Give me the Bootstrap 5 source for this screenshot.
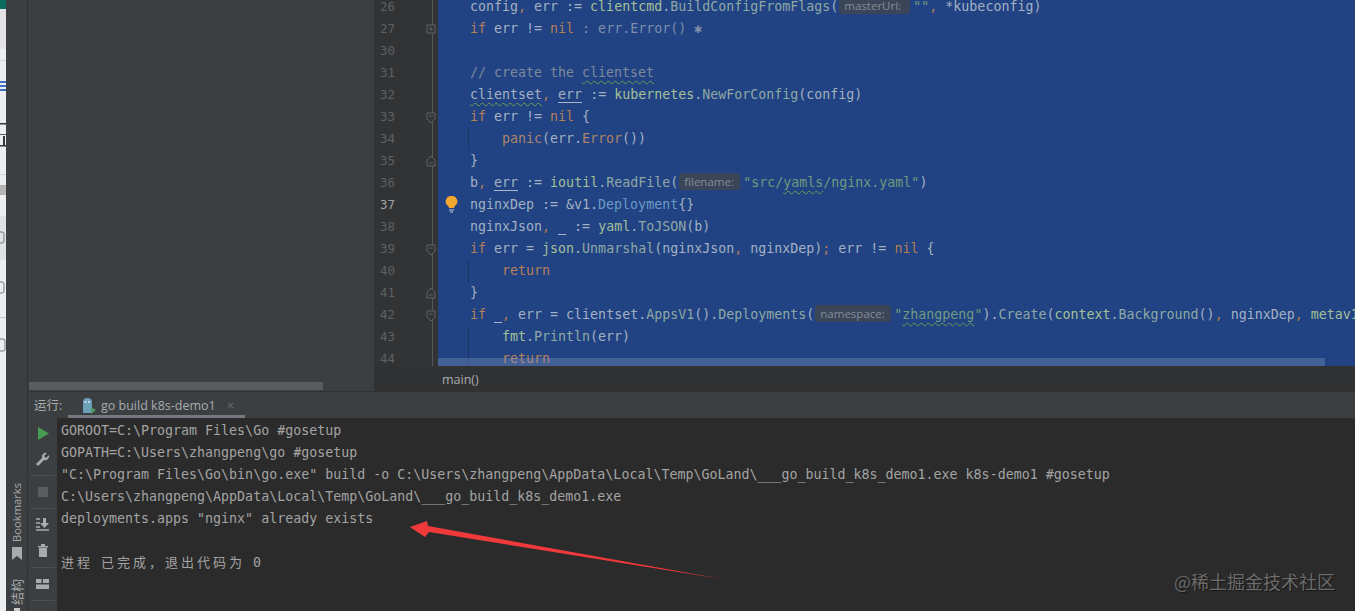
<!DOCTYPE html>
<html lang="zh">
<head>
<meta charset="utf-8">
<title>GoLand</title>
<link href="https://cdn.jsdelivr.net/npm/bootstrap@5.3.0/dist/css/bootstrap.min.css" rel="stylesheet">
<style>
html,body{height:611px;overflow:hidden;background:#3c3f41;}
.ide{width:1355px;height:611px;font-family:"DejaVu Sans Mono","Noto Sans CJK SC",monospace;font-size:13.3px;}
.edge{width:6px;flex:none;display:block;}
.stripe{width:22px;flex:none;background:#3c3f41;border-right:1px solid #323232;color:#a8abad;font-family:"Open Sans","Noto Sans CJK SC",sans-serif;padding-left:1px;}
.vtext{writing-mode:vertical-rl;text-orientation:sideways;transform:rotate(180deg);font-size:11.2px;line-height:14px;white-space:nowrap;}
.bm-label{margin-bottom:5px;}
.bm-icon{margin-bottom:19px;flex:none;}
.cn-label{font-size:13px;margin-bottom:3px;}
.stripe-dot{display:block;width:6px;height:3px;background:#c8cacc;flex:none;}
.toprow{height:391px;flex:none;}
.project{width:346px;flex:none;background:#3c3f41;}
.pscroll{height:8px;width:294px;margin:0 0 1px 1px;background:#595b5d;}
.gutter{width:64px;flex:none;background:#313335;margin-top:-4px;color:#5d6164;font-size:12.5px;}
.gline{height:22px;line-height:22px;padding-left:6px;width:59px;border-right:1px solid #55585a;position:relative;}
.gline.now{color:#a4a4a4;}
.gline svg{position:absolute;right:-6px;top:5px;}
.codewrap{background:#214283;}
.codebody{margin-top:-4px;color:#a3b1c2;}
.cl{height:22px;line-height:22px;padding-left:32px;position:relative;white-space:pre;}
.cl.in{padding-left:30px;}
.guide{display:block;height:22px;border-left:1px solid #1b3566;padding-left:33px;}
.kw{color:#b57f58;}.op{color:#b57f58;}
.pk{color:#a3c098;}.fn{color:#8ea9a3;}.me{color:#ab8569;}.ty{color:#6a9bc3;}
.st{color:#6f9a80;}.cm{color:#7d8a9c;}.dim{color:#7f8fa8;}
.wav{text-decoration:underline wavy #6f9a50 1px;text-underline-offset:3px;}
.und{text-decoration:underline solid #a9b7c6 1px;text-underline-offset:3px;}
.hint{display:inline-block;height:17px;line-height:17px;background:#3a4558;color:#858d99;border-radius:3px;font-family:"Open Sans",sans-serif;font-size:11.5px;padding:0 5px;margin:0 3px 0 1px;vertical-align:-3px;overflow:hidden;text-align:left;}
.h1{width:71px;}.h2{width:61px;}.h3{width:76px;}
.bulb{position:absolute;left:7px;top:2px;}
.hscroll{position:absolute;left:0;bottom:0;height:8px;width:887px;background:rgba(140,160,190,.33);}
.crumb{height:25px;flex:none;background:#2f3132;color:#a9adb0;font-family:"Open Sans",sans-serif;font-size:12.5px;line-height:23px;padding:2px 0 0 68px;}
.runbar{height:27px;flex:none;background:#3c3f41;border-top:1px solid #323232;color:#a8abad;font-family:"Open Sans","Noto Sans CJK SC",sans-serif;font-size:12.5px;}
.runlabel{width:40px;padding:2px 0 0 6px;flex:none;line-height:24px;white-space:nowrap;}
.runtab{width:177px;height:26px;border-bottom:3px solid #747a80;flex:none;padding:5px 0 0 14px;white-space:nowrap;gap:5px;}
.xmark{color:#686b6e;margin-left:6px;font-size:13px;}
.tools{width:29px;flex:none;background:#3c3f41;}
.tb{height:26px;flex:none;}
.tb-m2{margin-top:2px;}.tb-m3{margin-top:3px;}.tsep-m3{margin-top:3px;}.tsep-m4{margin-top:4px;}
.tsep{height:1px;background:#4d5052;flex:none;width:24px;margin-left:3px;}
.console{background:#2b2b2b;color:#a3a3a3;padding:2px 0 0 4px;}
.cline{height:22px;line-height:22px;white-space:pre;}
.cjk{font-size:13px;letter-spacing:3px;}
.arrow{position:absolute;left:405px;top:518px;}
.mark-wm{position:absolute;right:20px;bottom:19px;color:#6b6b6b;font-family:"Noto Sans CJK SC",sans-serif;font-size:18px;line-height:22px;text-shadow:1px 1px 1px #161616;}
</style>
</head>
<body class="m-0">
<div class="ide d-flex position-relative overflow-hidden">
  <svg class="edge" width="6" height="611" viewBox="0 0 6 611" aria-hidden="true">
    <rect width="6" height="611" fill="#eceef0"/>
    <rect width="6" height="9" fill="#0c6b60"/>
    <rect y="9" width="6" height="40" fill="#e3e3e5"/>
    <rect y="60" width="6" height="1" fill="#d2d2d2"/>
    <rect y="81" width="6" height="2" fill="#3f70c2"/><rect y="85" width="6" height="2" fill="#3f70c2"/><rect y="89" width="6" height="2" fill="#3f70c2"/>
    <rect y="123" width="6" height="1.500" fill="#33363a"/>
    <rect y="134" width="6" height="1" fill="#555"/><rect y="145" width="6" height="1.500" fill="#33363a"/><rect x="3" y="136" width="2" height="10" fill="#33363a"/>
    <rect y="174" width="6" height="1" fill="#cfcfcf"/>
    <rect y="185" width="6" height="10" fill="#b5b5b5"/>
    <rect y="216" width="6" height="44" fill="#e0e1e4"/>
    <path d="M0 232H2Q4 232 4 234V241Q4 243 2 243H0" fill="none" stroke="#777"/>
    <path d="M0 282H2Q4 282 4 284V291Q4 293 2 293H0" fill="none" stroke="#777"/>
    <rect y="317" width="6" height="1" fill="#c9c9c9"/>
    <path d="M0 339H3Q5 339 5 341V349Q5 351 3 351H0" fill="none" stroke="#777"/>
  </svg>
  <div class="stripe d-flex flex-column align-items-center justify-content-end">
    <span class="vtext bm-label">Bookmarks</span>
    <svg class="bm-icon" width="10" height="13" viewBox="0 0 10 13" aria-hidden="true"><path d="M0 0H10V13L5 9L0 13Z" fill="#a8abad"/></svg>
    <span class="vtext cn-label">结构</span>
    <span class="stripe-dot"></span>
  </div>
  <div class="d-flex flex-column flex-grow-1 overflow-hidden">
    <div class="toprow d-flex">
      <div class="project d-flex flex-column justify-content-end"><div class="pscroll"></div></div>
      <div class="d-flex flex-column flex-grow-1 overflow-hidden">
        <div class="d-flex flex-grow-1 overflow-hidden">
          <div class="gutter">
            <div class="gline">26</div>
            <div class="gline">27<svg width="13" height="13" viewBox="0 0 13 13" aria-hidden="true"><rect x="2" y="2" width="8" height="8" fill="#313335" stroke="#606366"/><path d="M4 6H8M6 4V8" stroke="#606366"/></svg></div>
            <div class="gline">30</div>
            <div class="gline">31</div>
            <div class="gline">32</div>
            <div class="gline">33<svg width="13" height="13" viewBox="0 0 13 13" aria-hidden="true"><path d="M2 2H10V8L6 12L2 8Z" fill="#313335" stroke="#606366"/><path d="M4 5H8" stroke="#606366"/></svg></div>
            <div class="gline">34</div>
            <div class="gline">35<svg width="13" height="13" viewBox="0 0 13 13" aria-hidden="true"><path d="M2 11H10V5L6 1L2 5Z" fill="#313335" stroke="#606366"/><path d="M4 8H8" stroke="#606366"/></svg></div>
            <div class="gline">36</div>
            <div class="gline now">37</div>
            <div class="gline">38</div>
            <div class="gline">39<svg width="13" height="13" viewBox="0 0 13 13" aria-hidden="true"><path d="M2 2H10V8L6 12L2 8Z" fill="#313335" stroke="#606366"/><path d="M4 5H8" stroke="#606366"/></svg></div>
            <div class="gline">40</div>
            <div class="gline">41<svg width="13" height="13" viewBox="0 0 13 13" aria-hidden="true"><path d="M2 11H10V5L6 1L2 5Z" fill="#313335" stroke="#606366"/><path d="M4 8H8" stroke="#606366"/></svg></div>
            <div class="gline">42<svg width="13" height="13" viewBox="0 0 13 13" aria-hidden="true"><path d="M2 2H10V8L6 12L2 8Z" fill="#313335" stroke="#606366"/><path d="M4 5H8" stroke="#606366"/></svg></div>
            <div class="gline">43</div>
            <div class="gline">44</div>
          </div>
          <div class="codewrap flex-grow-1 position-relative overflow-hidden">
            <div class="codebody">
<div class="cl">config<span class="op">,</span> err := <span class="pk">clientcmd</span>.<span class="fn">BuildConfigFromFlags</span>(<span class="hint h1">masterUrl:</span><span class="st">""</span><span class="op">,</span> *kubeconfig)</div>
<div class="cl"><span class="kw">if</span> err != <span class="kw">nil</span> <span class="dim">: err.Error() ✱</span></div>
<div class="cl"> </div>
<div class="cl"><span class="cm">// create the <span class="wav">clientset</span></span></div>
<div class="cl"><span class="wav">clientset</span><span class="op">,</span> <span class="und">err</span> := <span class="pk">kubernetes</span>.<span class="fn">NewForConfig</span>(config)</div>
<div class="cl"><span class="kw">if</span> err != <span class="kw">nil</span> {</div>
<div class="cl in"><span class="guide"><span class="me">panic</span>(err.<span class="me">Error</span>())</span></div>
<div class="cl">}</div>
<div class="cl">b<span class="op">,</span> <span class="und">err</span> := <span class="pk">ioutil</span>.<span class="fn">ReadFile</span>(<span class="hint h2">filename:</span><span class="st">"src/<span class="wav">yamls</span>/nginx.yaml"</span>)</div>
<div class="cl"><svg class="bulb" width="13" height="17" viewBox="0 0 13 17" aria-hidden="true"><path d="M6.500 0A5.500 5.500 0 0 1 10 10Q9 11 9 12H4Q4 11 3 10A5.500 5.500 0 0 1 6.500 0Z" fill="#f2a72e"/><path d="M4 14H9M5 16H8" stroke="#c9cdd6"/></svg>nginxDep := &amp;v1.<span class="ty">Deployment</span>{}</div>
<div class="cl">nginxJson<span class="op">,</span> <span class="und">_</span> := <span class="pk">yaml</span>.<span class="fn">ToJSON</span>(b)</div>
<div class="cl"><span class="kw">if</span> err = <span class="pk">json</span>.<span class="fn">Unmarshal</span>(nginxJson<span class="op">,</span> nginxDep)<span class="op">;</span> err != <span class="kw">nil</span> {</div>
<div class="cl in"><span class="guide"><span class="kw">return</span></span></div>
<div class="cl">}</div>
<div class="cl"><span class="kw">if</span> <span class="und">_</span><span class="op">,</span> err = clientset.<span class="fn">AppsV1</span>().<span class="fn">Deployments</span>(<span class="hint h3">namespace:</span><span class="st">"<span class="wav">zhangpeng</span>"</span>).<span class="fn">Create</span>(<span class="pk">context</span>.<span class="fn">Background</span>()<span class="op">,</span> nginxDep<span class="op">,</span> <span class="pk">metav1</span>.CreateOptions{})</div>
<div class="cl in"><span class="guide"><span class="pk">fmt</span>.<span class="fn">Println</span>(err)</span></div>
<div class="cl in"><span class="guide"><span class="kw">return</span></span></div>
            </div>
            <div class="hscroll"></div>
          </div>
        </div>
        <div class="crumb">main()</div>
      </div>
    </div>
    <div class="runbar d-flex">
      <div class="runlabel">运行:</div>
      <div class="runtab d-flex align-items-center">
        <svg width="14" height="16" viewBox="0 0 14 16" aria-hidden="true"><path d="M1 4Q1 0 5.500 0T10 4V15H1Z" fill="#6d9fb8"/><circle cx="3.500" cy="4" r="1" fill="#dfe8ee"/><circle cx="7" cy="4" r="1" fill="#dfe8ee"/><path d="M9 9L14 12L9 16Z" fill="#4f9a5f"/></svg>
        <span>go build k8s-demo1</span><span class="xmark">×</span>
      </div>
    </div>
    <div class="d-flex flex-grow-1">
      <div class="tools d-flex flex-column">
        <div class="tb tb-m2 d-flex align-items-center justify-content-center"><svg width="12" height="13" viewBox="0 0 12 13" aria-hidden="true"><path d="M1 0L12 6.500L1 13Z" fill="#499c54"/></svg></div>
        <div class="tb d-flex align-items-center justify-content-center"><svg width="15" height="15" viewBox="0 0 15 15" aria-hidden="true"><path d="M14 3L11 6L9 4L12 1A4 4 0 0 0 7 6L1 12L3 14L9 8A4 4 0 0 0 14 3Z" fill="#a8abad"/></svg></div>
        <div class="tsep tsep-m3"></div>
        <div class="tb tb-m3 d-flex align-items-center justify-content-center"><svg width="10" height="10" viewBox="0 0 10 10" aria-hidden="true"><rect width="10" height="10" fill="#5a5d5f"/></svg></div>
        <div class="tsep tsep-m3"></div>
        <div class="tb tb-m2 d-flex align-items-center justify-content-center"><svg width="13" height="13" viewBox="0 0 13 13" aria-hidden="true"><path d="M0 1H4M0 5H4M0 9H4M0 12H13" stroke="#a8abad" stroke-width="1.500"/><path d="M7 0H10V5H13L8.500 10L4 5H7Z" fill="#a8abad"/></svg></div>
        <div class="tb d-flex align-items-center justify-content-center"><svg width="10" height="13" viewBox="0 0 10 13" aria-hidden="true"><path d="M0 2H10V3.500H0ZM3 0H7V2H3ZM1 4H9V13H1Z" fill="#a8abad"/></svg></div>
        <div class="tsep tsep-m4"></div>
        <div class="tb tb-m3 d-flex align-items-center justify-content-center"><svg width="13" height="10" viewBox="0 0 13 10" aria-hidden="true"><path d="M0 0H5.500V4H0ZM7 0H13V4H7ZM0 5.500H13V10H0Z" fill="#a8abad"/></svg></div>
        <div class="tsep tsep-m3"></div>
      </div>
      <div class="console flex-grow-1">
<div class="cline">GOROOT=C:\Program Files\Go #gosetup</div>
<div class="cline">GOPATH=C:\Users\zhangpeng\go #gosetup</div>
<div class="cline">"C:\Program Files\Go\bin\go.exe" build -o C:\Users\zhangpeng\AppData\Local\Temp\GoLand\___go_build_k8s_demo1.exe k8s-demo1 #gosetup</div>
<div class="cline">C:\Users\zhangpeng\AppData\Local\Temp\GoLand\___go_build_k8s_demo1.exe</div>
<div class="cline">deployments.apps "nginx" already exists</div>
<div class="cline"> </div>
<div class="cline"><span class="cjk">进程</span> <span class="cjk">已完成，退出代码为</span> 0</div>
      </div>
    </div>
  </div>
  <svg class="arrow" width="325" height="70" viewBox="405 518 325 70" aria-hidden="true"><path d="M410 527L427 521L428 526L722 579L429 532L425 537Z" fill="#f0393b"/></svg>
  <div class="mark-wm">@稀土掘金技术社区</div>
</div>
<script src="https://cdn.jsdelivr.net/npm/bootstrap@5.3.0/dist/js/bootstrap.bundle.min.js"></script>
</body>
</html>
